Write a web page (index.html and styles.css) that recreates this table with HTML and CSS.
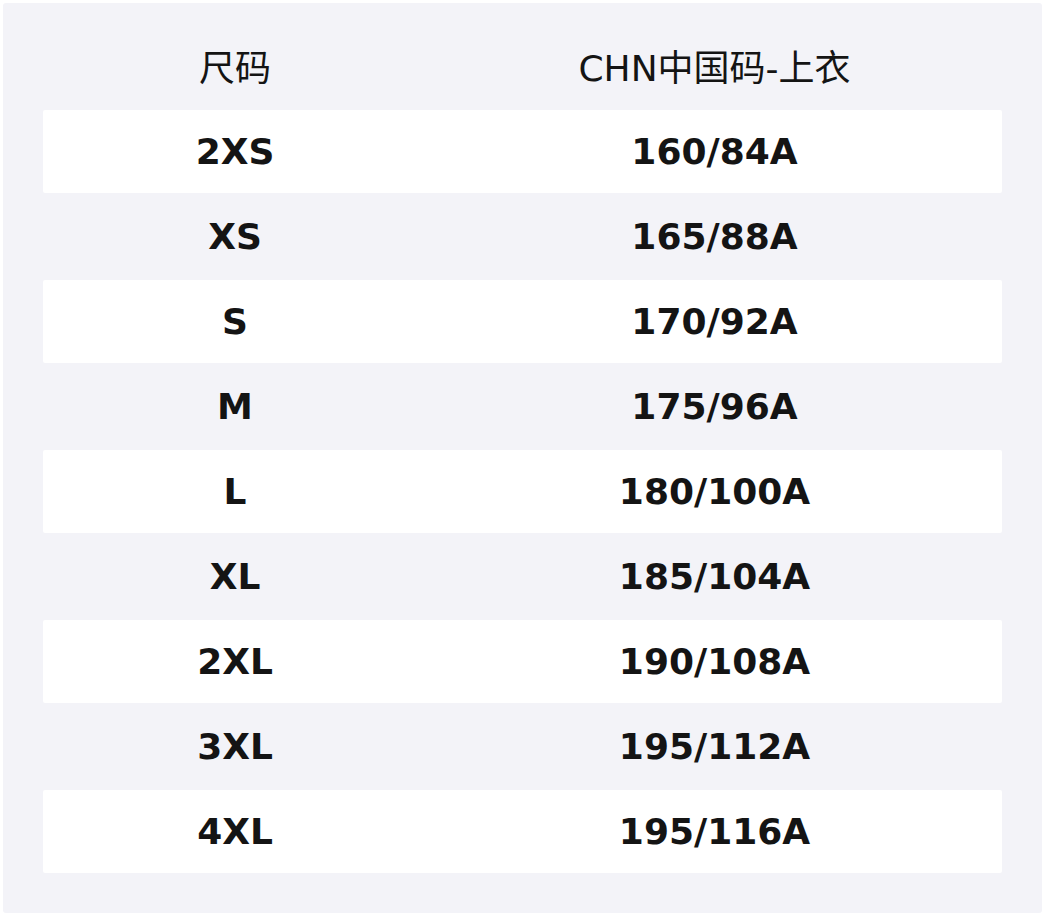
FILE: index.html
```html
<!DOCTYPE html>
<html lang="zh">
<head>
<meta charset="utf-8">
<link rel="stylesheet" href="styles.css">
</head>
<body>
<div class="panel">
  <div class="row head"><div class="cell">尺码</div><div class="cell">CHN中国码-上衣</div></div>
  <div class="row odd"><div class="cell">2XS</div><div class="cell">160/84A</div></div>
  <div class="row"><div class="cell">XS</div><div class="cell">165/88A</div></div>
  <div class="row odd"><div class="cell">S</div><div class="cell">170/92A</div></div>
  <div class="row"><div class="cell">M</div><div class="cell">175/96A</div></div>
  <div class="row odd"><div class="cell">L</div><div class="cell">180/100A</div></div>
  <div class="row"><div class="cell">XL</div><div class="cell">185/104A</div></div>
  <div class="row odd"><div class="cell">2XL</div><div class="cell">190/108A</div></div>
  <div class="row"><div class="cell">3XL</div><div class="cell">195/112A</div></div>
  <div class="row odd"><div class="cell">4XL</div><div class="cell">195/116A</div></div>
</div>
</body>
</html>
```
FILE: styles.css
```css
html, body {
  margin: 0;
  padding: 0;
  background: #ffffff;
}
body {
  padding: 3px 4px 5px 3px;
  font-family: "DejaVu Sans", "Noto Sans CJK SC", sans-serif;
  color: #141414;
}
.panel {
  background: #f3f3f8;
  border-radius: 3px;
  padding: 21px 40px 39px 40px;
  height: 910px;
  box-sizing: border-box;
}
.row {
  display: grid;
  grid-template-columns: 384px 1fr;
  height: 85px;
  align-items: center;
  font-size: 36px;
  font-weight: bold;
}
.row .cell {
  text-align: center;
}
.row.odd {
  background: #ffffff;
  height: 83px;
  margin: 1px 0;
  border-radius: 2px;
}
.row.head {
  font-size: 36px;
  font-weight: normal;
  height: 85px;
}
.row.head .cell {
  padding-bottom: 4px;
}
```
